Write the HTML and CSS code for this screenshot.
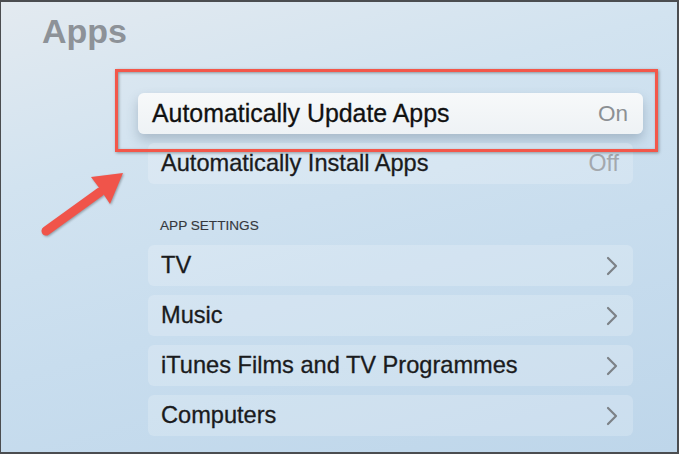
FILE: index.html
```html
<!DOCTYPE html>
<html lang="en">
<head>
    <meta charset="UTF-8">
    <meta name="viewport" content="width=device-width, initial-scale=1.0">
    <title>Apps</title>
    <link rel="stylesheet" href="styles.css">
</head>
<body>
    <div class="screen">
        <h1 class="title">Apps</h1>

        <div class="list">
            <div class="row focused">
                <span class="label">Automatically Update Apps</span>
                <span class="value">On</span>
            </div>
            <div class="row">
                <span class="label">Automatically Install Apps</span>
                <span class="value off">Off</span>
            </div>

            <div class="section">APP SETTINGS</div>

            <div class="row">
                <span class="label">TV</span>
                <svg class="chevron" width="12" height="20" viewBox="0 0 12 20"><polyline points="2,2 10,10 2,18"/></svg>
            </div>
            <div class="row">
                <span class="label">Music</span>
                <svg class="chevron" width="12" height="20" viewBox="0 0 12 20"><polyline points="2,2 10,10 2,18"/></svg>
            </div>
            <div class="row">
                <span class="label">iTunes Films and TV Programmes</span>
                <svg class="chevron" width="12" height="20" viewBox="0 0 12 20"><polyline points="2,2 10,10 2,18"/></svg>
            </div>
            <div class="row">
                <span class="label">Computers</span>
                <svg class="chevron" width="12" height="20" viewBox="0 0 12 20"><polyline points="2,2 10,10 2,18"/></svg>
            </div>
        </div>

        <!-- annotation overlay -->
        <div class="highlight"></div>
        <svg class="arrow" width="679" height="454" viewBox="0 0 679 454">
            <line x1="46" y1="231" x2="100" y2="192" />
            <polygon points="123,173 91,177 100,189 110,204" />
        </svg>
    </div>
</body>
</html>
```

FILE: styles.css
```css
body {
    margin: 0;
    padding: 0;
    font-family: 'Liberation Sans', Arial, sans-serif;
}

.screen {
    position: relative;
    box-sizing: border-box;
    width: 679px;
    height: 454px;
    overflow: hidden;
    border-style: solid;
    border-color: #4b4d50;
    border-width: 2px 2px 2px 1px;
    padding: 9px 0 0 41px;
    background: linear-gradient(165deg, #e3eaf0 0%, #d2e3f0 30%, #c8ddee 60%, #bed6ea 100%);
}

.title {
    margin: 0;
    height: 40px;
    line-height: 40px;
    font-size: 34px;
    font-weight: bold;
    color: #8d9298;
}

.list {
    margin: 42px 0 0 106px;
    width: 485px;
    display: flex;
    flex-direction: column;
}

.row {
    box-sizing: border-box;
    height: 41px;
    margin-bottom: 9px;
    padding: 0 14px 0 13px;
    display: flex;
    align-items: center;
    justify-content: space-between;
    border-radius: 6px;
    background-color: rgba(255, 255, 255, 0.2);
    font-size: 23.6px;
    color: #1a1b1d;
}

.label {
    -webkit-text-stroke: 0.3px currentColor;
}

.row.focused {
    margin-left: -10px;
    margin-right: -10px;
    padding: 0 15px 0 14px;
    background: linear-gradient(180deg, #f7f9fa 0%, #eef2f5 100%);
    box-shadow: 0 6px 12px rgba(60, 80, 100, 0.28);
    font-size: 24.9px;
    color: #111;
}

.value {
    color: #8c9094;
    font-size: 22.5px;
}

.value.off {
    color: #a3a8ad;
    font-size: 23.2px;
}

.section {
    margin: 25px 0 11px 12px;
    height: 16px;
    line-height: 16px;
    font-size: 13.6px;
    color: #35383d;
    -webkit-text-stroke: 0.15px currentColor;
}

.chevron {
    margin-right: 1px;
}

.chevron polyline {
    fill: none;
    stroke: #7c8186;
    stroke-width: 2.2;
    stroke-linecap: round;
    stroke-linejoin: round;
}

.highlight {
    position: absolute;
    left: 114px;
    top: 67px;
    width: 537px;
    height: 77px;
    border: 3px solid #f3574a;
    box-shadow: 1px 1px 3px rgba(0, 0, 0, 0.35), inset 1px 1px 3px rgba(0, 0, 0, 0.35);
}

.arrow {
    position: absolute;
    left: -1px;
    top: -2px;
    filter: drop-shadow(1px 1px 1px rgba(0, 0, 0, 0.3));
}

.arrow line {
    stroke: #f0544a;
    stroke-width: 9;
    stroke-linecap: round;
}

.arrow polygon {
    fill: #f0544a;
}
```
